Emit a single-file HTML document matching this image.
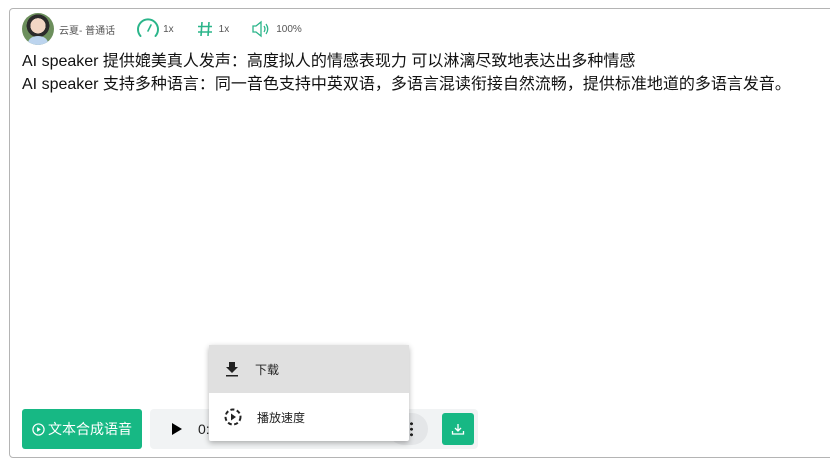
<!DOCTYPE html>
<html><head><meta charset="utf-8"><style>
*{box-sizing:border-box;margin:0;padding:0}
body{width:830px;height:475px;background:#fff;font-family:"Liberation Sans","Noto Sans CJK SC",sans-serif;position:relative;overflow:hidden;color:#222}
.box{position:absolute;left:9px;top:8px;width:840px;height:450px;border:1px solid #b4b4b4;border-radius:4px}
.hdr{position:absolute;left:22px;top:13px;height:32px;display:flex;align-items:center;font-size:10px;color:#555}
.av{width:32px;height:32px;border-radius:50%;background:radial-gradient(circle at 50% 40%,#f2d6c4 0 30%,#2b2b2b 31% 45%,#6c8f5c 46%);position:relative;overflow:hidden;margin-right:5px}
.av:after{content:"";position:absolute;left:6px;top:23px;width:20px;height:14px;border-radius:50%;background:#bcd4ee}
.txt{position:absolute;left:22px;top:50px;font-size:16px;line-height:23px;color:#111;white-space:nowrap}
.btn{position:absolute;left:22px;top:409px;width:120px;height:40px;background:#17b884;border-radius:3px;color:#fff;font-size:14px;display:flex;align-items:center;justify-content:center;gap:3px}
.player{position:absolute;left:150px;top:409px;width:328px;height:40px;background:#f1f3f4;border-radius:4px}
.dl{position:absolute;left:442px;top:413px;width:32px;height:32px;background:#17b884;border-radius:3px;display:flex;align-items:center;justify-content:center}
.menu{position:absolute;left:209px;top:345px;width:200px;height:96px;background:#fff;box-shadow:0 2px 6px rgba(0,0,0,.3);border-radius:2px;font-size:12px;color:#222}
.mi{height:48px;display:flex;align-items:center;padding-left:14px;gap:14px}
</style></head><body>
<div class="box"></div>
<div class="hdr"><div class="av"></div><span>云夏- 普通话</span>
<svg width="24" height="24" viewBox="0 0 24 24" style="margin-left:21px"><path d="M4.5 19A10 10 0 1 1 19.5 19" fill="none" stroke="#2bb58a" stroke-width="2" stroke-linecap="round"/><path d="M12 14L15 8" stroke="#2bb58a" stroke-width="1.6" stroke-linecap="round"/></svg><span style="margin-left:3px">1x</span>
<svg width="18" height="18" viewBox="0 0 18 18" style="margin-left:22px"><path d="M6 2L5 16M13 2L12 16M2 6.5H16M2 12H16" stroke="#2bb58a" stroke-width="1.6" fill="none"/></svg><span style="margin-left:5px">1x</span>
<svg width="20" height="20" viewBox="0 0 20 20" style="margin-left:22px"><path d="M2 7H5L10 3V17L5 13H2Z" fill="none" stroke="#2bb58a" stroke-width="1.3"/><path d="M13 7Q15 10 13 13M15 5Q18.5 10 15 15" fill="none" stroke="#2bb58a" stroke-width="1.3"/></svg><span style="margin-left:5px">100%</span>
</div>
<div class="txt">AI speaker 提供媲美真人发声：高度拟人的情感表现力 可以淋漓尽致地表达出多种情感<br>AI speaker 支持多种语言：同一音色支持中英双语，多语言混读衔接自然流畅，提供标准地道的多语言发音。</div>
<div class="btn"><svg width="13" height="13" viewBox="0 0 14 14"><circle cx="7" cy="7" r="6" fill="none" stroke="#fff" stroke-width="1.3"/><path d="M5.5 4.5L9.5 7L5.5 9.5Z" fill="#fff"/></svg>文本合成语音</div>
<div class="player">
<svg style="position:absolute;left:22px;top:14px" width="10" height="12"><path d="M0 0L10 6L0 12Z" fill="#000"/></svg>
<span style="position:absolute;left:48px;top:12px;font-size:14px;color:#222">0:</span>
<div style="position:absolute;left:238px;top:4px;width:40px;height:32px;border-radius:16px;background:#e4e6e8"></div>
<div style="position:absolute;left:260px;top:12px;width:3px;height:16px;background:radial-gradient(circle,#222 1.4px,transparent 1.6px) 0 0/3px 5.5px"></div>
</div>
<div class="dl"><svg width="14" height="14" viewBox="0 0 14 14"><path d="M7 2V9M4 6L7 9L10 6M1.5 9V12H12.5V9" fill="none" stroke="#fff" stroke-width="1.3"/></svg></div>
<div class="menu">
<div class="mi" style="background:#e0e0e0"><svg width="18" height="18" viewBox="0 0 18 18"><path d="M6 2H12V7H15L9 13L3 7H6Z M3 15H15V16.5H3Z" fill="#222"/></svg><span>下载</span></div>
<div class="mi"><svg width="20" height="20" viewBox="0 0 20 20"><circle cx="10" cy="10" r="7.5" fill="none" stroke="#222" stroke-width="2" stroke-dasharray="4 2.5"/><path d="M8 6.5L13 10L8 13.5Z" fill="#222"/></svg><span>播放速度</span></div>
</div>
</body></html>
